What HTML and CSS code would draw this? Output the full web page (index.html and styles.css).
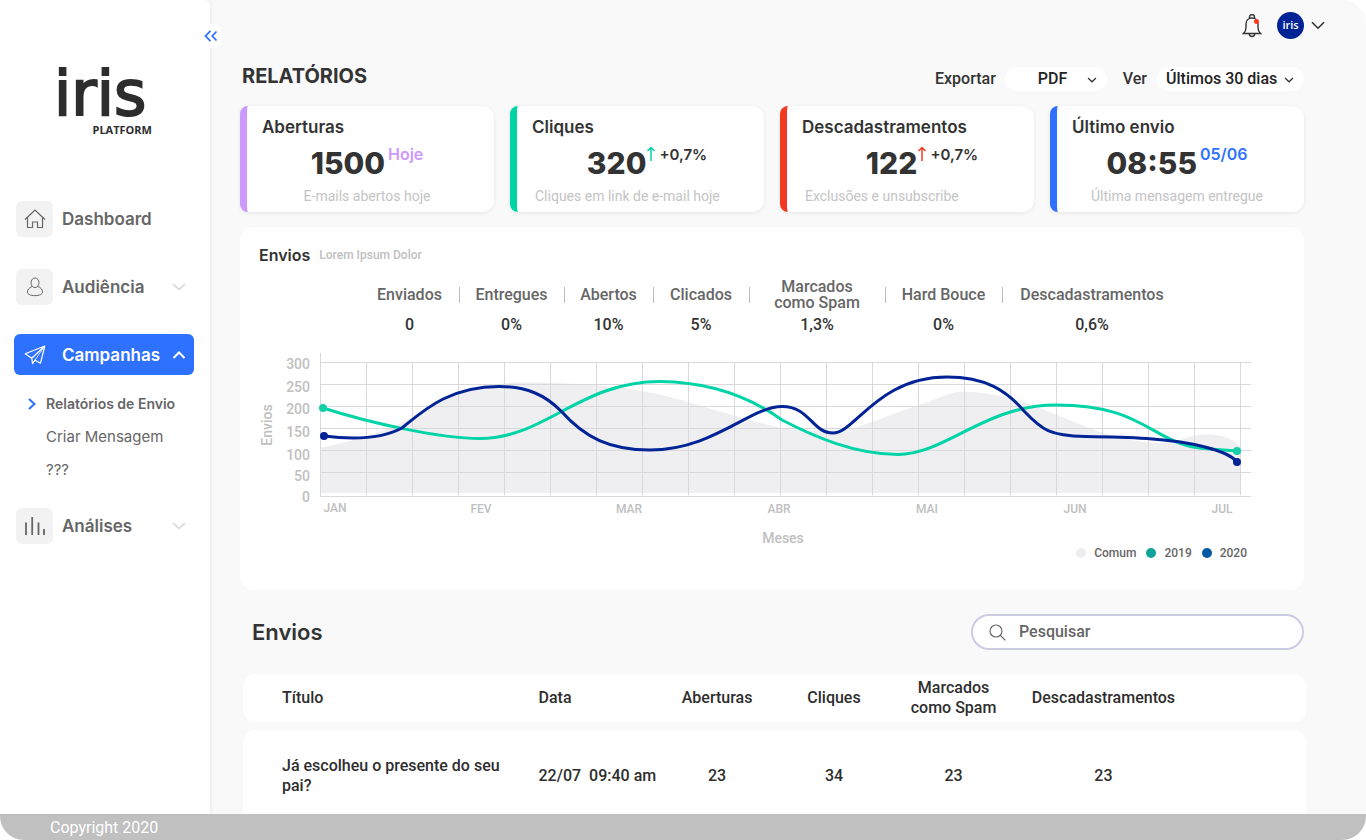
FILE: index.html
```html
<!DOCTYPE html>
<html lang="pt-BR">
<head>
<meta charset="utf-8">
<meta name="viewport" content="width=device-width, initial-scale=1">
<title>iris Platform – Relatórios</title>
<link rel="stylesheet" href="styles.css">
</head>
<body>
<div class="app">
  <div class="shell">
    <aside class="sidebar">
      <button class="collapse" type="button" aria-label="Recolher menu">
        <svg width="14" height="12" viewBox="0 0 14 12"><path d="M6.500 .8 1.500 6l5 5.200M12.500 1.500 8.300 6l4.200 4.500" fill="none" stroke="#2f71ff" stroke-width="1.800"/></svg>
      </button>
      <div class="brand">
        <span class="brand-name">iris</span>
        <span class="brand-sub">PLATFORM</span>
      </div>
      <nav class="nav">
        <a class="nav-item" href="#dashboard">
          <span class="tile"><svg width="22" height="20" viewBox="0 0 22 20"><path d="M1 10.500 11 1l10 9.500M3.500 8.500V18.500h5v-5.500h5v5.500h5V8.500" fill="none" stroke="#666" stroke-width="1.200"/></svg></span>
          <span class="nav-label">Dashboard</span>
        </a>
        <button class="nav-item" type="button">
          <span class="tile"><svg width="18" height="20" viewBox="0 0 18 20"><ellipse cx="9" cy="5.800" rx="4" ry="4.800" fill="none" stroke="#666"/><path d="M6.200 9.500C3.500 10.500 1.500 12.300 1.500 15c0 2.500 3 3.600 7.500 3.600s7.500-1.100 7.500-3.600c0-2.700-2-4.500-4.700-5.500" fill="none" stroke="#666"/></svg></span>
          <span class="nav-label">Audiência</span>
          <svg class="nav-caret" width="14" height="8" viewBox="0 0 14 8"><path d="m1 1 6 5.500L13 1" fill="none" stroke="#ddd" stroke-width="1.800"/></svg>
        </button>
        <div class="nav-group">
          <button class="nav-item nav-item-active" type="button" aria-expanded="true">
            <span class="tile tile-clear"><svg width="22" height="20" viewBox="0 0 22 20"><path d="M1.200 8.800 20.800 1 16.500 18.200 11 15.200l-2.500 3.500-.700-5.500L1.200 8.800ZM7.800 13.200 20.500 1.300" fill="none" stroke="#fff" stroke-width="1.200" stroke-linejoin="round"/><path d="M20.500 1.300 11 15.200" stroke="#fff" stroke-width=".800"/></svg></span>
            <span class="nav-label">Campanhas</span>
            <svg class="nav-caret" width="14" height="8" viewBox="0 0 14 8"><path d="m1.500 7 5.500-5.500L12.500 7" fill="none" stroke="#fff" stroke-width="2"/></svg>
          </button>
          <ul class="subnav">
            <li><a class="current" href="#envio"><svg class="sub-mark" width="8" height="12" viewBox="0 0 8 12"><path d="m1 1 5.500 5L1 11" fill="none" stroke="#2f71ff" stroke-width="2"/></svg>Relatórios de Envio</a></li>
            <li><a href="#criar">Criar Mensagem</a></li>
            <li><a href="#outros">???</a></li>
          </ul>
        </div>
        <button class="nav-item" type="button">
          <span class="tile"><svg width="22" height="20" viewBox="0 0 22 20"><path d="M2 6.500V19M8.200 1v18M14.500 6.500V19M20 13v6" stroke="#666" stroke-width="1.800" fill="none"/></svg></span>
          <span class="nav-label">Análises</span>
          <svg class="nav-caret" width="14" height="8" viewBox="0 0 14 8"><path d="m1 1 6 5.500L13 1" fill="none" stroke="#ddd" stroke-width="1.800"/></svg>
        </button>
      </nav>
    </aside>

    <main class="main">
      <header class="topbar">
        <button class="icon-button" type="button" aria-label="Notificações">
          <svg width="20" height="24" viewBox="0 0 20 24"><path d="M1.500 19.500h17c-1.800-1.700-2.500-3.500-2.500-6V10c0-3.500-2.300-6-6-6s-6 2.500-6 6v3.500c0 2.500-.700 4.300-2.500 6ZM7.500 4.300V3a2.500 2.500 0 0 1 5 0v1.300M7.200 19.800c.300 1.800 1.300 2.700 2.800 2.700s2.500-.900 2.800-2.700" fill="none" stroke="#333" stroke-width="1.400"/><circle cx="14.500" cy="7.500" r="2.500" fill="#ff3a1d"/></svg>
        </button>
        <button class="profile" type="button" aria-label="Conta iris">
          <span class="avatar">iris</span>
          <svg width="14" height="9" viewBox="0 0 14 9"><path d="m1 1.200 6 6 6-6" fill="none" stroke="#333" stroke-width="1.600"/></svg>
        </button>
      </header>

      <div class="toolbar">
        <h1 class="page-title">RELATÓRIOS</h1>
        <label for="exportar">Exportar</label>
        <span class="picker picker-format">
          <select id="exportar"><option>PDF</option></select>
          <svg class="picker-caret" width="10" height="6" viewBox="0 0 10 6"><path d="m1 1 4 3.800L9 1" fill="none" stroke="#333" stroke-width="1.200"/></svg>
        </span>
        <label for="ver">Ver</label>
        <span class="picker picker-period">
          <select id="ver"><option>Últimos 30 dias</option></select>
          <svg class="picker-caret" width="10" height="6" viewBox="0 0 10 6"><path d="m1 1 4 3.800L9 1" fill="none" stroke="#333" stroke-width="1.200"/></svg>
        </span>
      </div>

      <section class="cards">
        <article class="card card-violet">
          <h2>Aberturas</h2>
          <p class="figure"><strong>1500</strong><span class="note">Hoje</span></p>
          <p class="caption">E-mails abertos hoje</p>
        </article>
        <article class="card card-trend card-green">
          <h2>Cliques</h2>
          <p class="figure"><strong>320</strong><svg class="arrow" width="10" height="16" viewBox="0 0 10 16"><path d="M5 15V1.500M1.500 5 5 1.500 8.500 5" fill="none" stroke="#00d4a6" stroke-width="1.500"/></svg><span class="change">+0,7%</span></p>
          <p class="caption">Cliques em link de e-mail hoje</p>
        </article>
        <article class="card card-trend card-red">
          <h2>Descadastramentos</h2>
          <p class="figure"><strong>122</strong><svg class="arrow" width="10" height="16" viewBox="0 0 10 16"><path d="M5 15V1.500M1.500 5 5 1.500 8.500 5" fill="none" stroke="#f23a22" stroke-width="1.500"/></svg><span class="change">+0,7%</span></p>
          <p class="caption">Exclusões e unsubscribe</p>
        </article>
        <article class="card card-blue">
          <h2>Último envio</h2>
          <p class="figure"><strong>08:55</strong><span class="note">05/06</span></p>
          <p class="caption">Última mensagem entregue</p>
        </article>
      </section>

      <section class="report">
        <header class="report-head"><h2>Envios</h2><span>Lorem Ipsum Dolor</span></header>
        <dl class="stats">
          <div><dt>Enviados</dt><dd>0</dd></div>
          <div><dt>Entregues</dt><dd>0%</dd></div>
          <div><dt>Abertos</dt><dd>10%</dd></div>
          <div><dt>Clicados</dt><dd>5%</dd></div>
          <div><dt>Marcados<br>como Spam</dt><dd>1,3%</dd></div>
          <div><dt>Hard Bouce</dt><dd>0%</dd></div>
          <div><dt>Descadastramentos</dt><dd>0,6%</dd></div>
        </dl>
        <svg class="chart" viewBox="240 345 1064 200" role="img" aria-label="Envios por mês">
          <path class="area" d="M320 448C350 442 380 433 405 421C425 410 440 400 458 393C480 385 500 383 520 382.500C560 382 610 385 645 391.500C690 400 730 417 782 428C800 431 825 432 845 430C860 428 885 416 919 405C935 400 945 394 957 392C975 391 995 394 1020 401C1045 409 1080 425 1103 433C1125 440 1160 447 1180 440C1205 430 1232 434 1241 448V493H320Z"/>
          <path class="grid" d="M320.500 353V496M366.500 362V495M412.500 362V495M458.500 362V495M504.500 362V495M550.500 362V495M596.500 362V495M642.500 362V495M688.500 362V495M734.500 362V495M780.500 362V495M826.500 362V495M872.500 362V495M918.500 362V495M964.500 362V495M1010.500 362V495M1056.500 362V495M1102.500 362V495M1148.500 362V495M1194.500 362V495M1240.500 362V495M320 362.500H1251M320 384.500H1251M320 406.500H1251M320 428.500H1251M320 450.500H1251M320 472.500H1251M320 496.500H1251"/>
          <path class="line line-2019" d="M323 408C370 423 440 438.500 480 438.500C545 438.500 580 381.500 660 381.500C710 382 750 397 782 420C815 437 855 454.500 898 454.500C945 454.500 985 405 1056 405C1150 405 1150 446 1210 449L1237 451"/>
          <path class="line line-2020" d="M324 436C355 440 383 438 402 428C422 412 448 386.500 499 386.500C527 386.500 545 395 561 411C585 438 610 450 650 450C713 450 750 406.500 782 406.500C810 406.500 812 433 833 433C855 433 878 377 947 377C985 377 1006 390 1024 411C1042 430 1050 436 1085 436.500C1125 437 1170 438 1205 447C1224 452 1232 456 1237 462"/>
          <g class="dot-2019"><circle cx="323" cy="408" r="4"/><circle cx="1237" cy="451" r="4"/></g>
          <g class="dot-2020"><circle cx="324" cy="436" r="4"/><circle cx="1237" cy="462" r="4"/></g>
          <g class="axis-y"><text x="310" y="369">300</text><text x="310" y="392">250</text><text x="310" y="414">200</text><text x="310" y="437">150</text><text x="310" y="460">100</text><text x="310" y="481">50</text><text x="310" y="502">0</text></g>
          <g class="axis-x"><text x="335" y="512">JAN</text><text x="481" y="513">FEV</text><text x="629" y="513">MAR</text><text x="779" y="513">ABR</text><text x="927" y="513">MAI</text><text x="1075" y="513">JUN</text><text x="1222" y="513">JUL</text></g>
          <text class="axis-title" x="783" y="543">Meses</text>
          <text class="axis-title" transform="translate(272 425) rotate(-90)">Envios</text>
        </svg>
        <ul class="legend">
          <li class="key-common">Comum</li>
          <li class="key-2019">2019</li>
          <li class="key-2020">2020</li>
        </ul>
      </section>

      <section class="list">
        <header class="list-head">
          <h2>Envios</h2>
          <label class="search">
            <svg width="17" height="17" viewBox="0 0 17 17"><circle cx="7" cy="7" r="6" fill="none" stroke="#666" stroke-width="1.200"/><path d="m11.300 11.300 5 5" stroke="#666" stroke-width="1.200"/></svg>
            <input type="search" placeholder="Pesquisar" aria-label="Pesquisar">
          </label>
        </header>
        <table class="table">
          <colgroup><col class="c-title"><col class="c-date"><col class="c-open"><col class="c-click"><col class="c-spam"><col class="c-unsub"><col></colgroup>
          <thead>
            <tr><th>Título</th><th>Data</th><th>Aberturas</th><th>Cliques</th><th>Marcados<br>como Spam</th><th>Descadastramentos</th><td></td></tr>
          </thead>
          <tbody>
            <tr><td>Já escolheu o presente do seu pai?</td><td>22/07&nbsp; 09:40 am</td><td>23</td><td>34</td><td>23</td><td>23</td><td></td></tr>
          </tbody>
        </table>
      </section>
    </main>
  </div>
  <footer class="footer">Copyright 2020</footer>
</div>
</body>
</html>
```

FILE: styles.css
```css
* { box-sizing: border-box; }
body { margin: 0; background: #fff; color: #333; font: 500 16px/20px Roboto, sans-serif; }
h1, h2, p, ul, dl, dd { margin: 0; padding: 0; }
ul { list-style: none; }
a { color: inherit; text-decoration: none; }
button, select, input { font: inherit; color: inherit; border: 0; background: none; padding: 0; margin: 0; }
svg { display: block; flex: none; }

.app { height: 100vh; display: flex; flex-direction: column; background: #f9f9f9; border-radius: 24px; overflow: hidden; }
.shell { flex: 1; min-height: 0; display: flex; }
.footer { height: 26px; padding-left: 50px; background: #c0c0c0; color: #fff; font-weight: 400; line-height: 27px; }

/* Sidebar */
.sidebar { position: relative; flex: none; width: 210px; background: #fff; border-top-right-radius: 6px; box-shadow: 1px 0 4px rgba(0, 0, 0, .06); }
.collapse { position: absolute; top: 24px; right: -12px; width: 24px; height: 24px; padding-left: 6px; border-radius: 8px; background: #fff; }
.brand { display: flex; flex-direction: column; padding: 64px 0 0 54px; color: #2d2d2d; }
.brand-name { font: 400 62px/60px "DejaVu Sans", sans-serif; -webkit-text-stroke: 2px #2d2d2d; }
.brand-sub { width: 98px; text-align: right; font: 700 11px/12px "Open Sans", sans-serif; }
.nav { display: flex; flex-direction: column; gap: 27px; padding: 62px 16px 0 14px; font-family: Inter, sans-serif; color: #666; }
.nav-item { display: flex; align-items: center; width: 100%; height: 41px; padding: 0 8px 0 2px; border-radius: 6px; text-align: left; }
.nav-group + .nav-item { margin-top: -2px; }
.nav-item-active { background: #2f71ff; color: #fff; }
.tile { display: flex; align-items: center; justify-content: center; flex: none; width: 37px; height: 36px; border-radius: 6px; background: #f2f2f2; }
.tile-clear { background: none; }
.nav-label { flex: 1; padding-left: 9px; font-size: 17px; font-weight: 600; }
.subnav { display: flex; flex-direction: column; gap: 13px; padding: 19px 0 0 32px; font-size: 15px; font-weight: 400; }
.subnav a { position: relative; display: block; white-space: nowrap; }
.subnav .current { font-size: 14px; font-weight: 600; }
.sub-mark { position: absolute; left: -18px; top: 4px; }

/* Main column */
.main { flex: 1; min-width: 0; overflow: hidden; padding: 12px 62px 0 30px; }
.topbar { display: flex; justify-content: flex-end; align-items: center; gap: 15px; height: 27px; margin-right: -21px; }
.profile { display: flex; align-items: center; gap: 7px; }
.avatar { width: 27px; height: 27px; border-radius: 50%; background: #002395; color: #fff; font: 600 11px/26px "Open Sans", sans-serif; }
.toolbar { display: flex; align-items: center; height: 24px; margin-top: 28px; }
.page-title { flex: 1; padding: 0 0 6px 2px; font: 700 20px/24px Inter, sans-serif; }
.picker { position: relative; height: 24px; border-radius: 12px; background: #fff; color: #222; }
.picker select { appearance: none; width: 100%; height: 24px; line-height: 24px; }
.picker-format { width: 102px; margin: 0 16px 0 9px; }
.picker-format select { padding-left: 33px; }
.picker-period { width: 147px; margin-left: 10px; }
.picker-period select { padding-left: 9px; }
.picker-caret { position: absolute; right: 10px; top: 10px; pointer-events: none; }

.cards { display: grid; grid-template-columns: repeat(4, 1fr); gap: 16px; margin-top: 15px; }
.card { height: 106px; padding: 10px 7px 0 0; border-left: 7px solid var(--accent); border-radius: 8px 12px 12px 8px; background: #fff; box-shadow: 0 1px 4px rgba(0, 0, 0, .08); }
.card-violet { --accent: #cc99ff; }
.card-green { --accent: #00d4a6; }
.card-red { --accent: #f23a22; }
.card-blue { --accent: #2f71ff; }
.card h2 { padding-left: 15px; font: 600 17px/22px Inter, sans-serif; }
.figure { display: flex; justify-content: center; height: 50px; font-family: Inter, sans-serif; font-weight: 600; }
.figure strong { font-size: 30px; line-height: 50px; font-weight: 800; }
.note { padding-left: 3px; line-height: 32px; color: var(--accent); }
.arrow { margin-top: 8px; }
.change { padding-left: 3px; font-size: 15px; line-height: 34px; }
.caption { text-align: center; font-size: 14px; line-height: 16px; font-weight: 400; color: #c4c4c4; }
.card-trend .figure { padding-left: 20px; }
.card-red .figure { padding-left: 30px; }
.card-trend .caption { padding-left: 18px; text-align: left; }

.report { margin-top: 15px; padding: 18px 0 29px; border-radius: 14px; background: #fff; }
.report-head { display: flex; align-items: center; gap: 9px; height: 20px; padding-left: 19px; }
.report-head h2 { font: 600 16px/20px Inter, sans-serif; }
.report-head span { font-size: 12px; color: #c0c0c0; }
.stats { display: grid; grid-template-columns: 99fr 105fr 89fr 96fr 136fr 117fr 180fr; margin-top: 13px; padding: 0 122px 0 120px; text-align: center; }
.stats div { position: relative; }
.stats div + div::before { content: ""; position: absolute; left: 0; top: 9px; height: 16px; border-left: 1px solid #bbb; }
.stats dt { display: flex; align-items: center; justify-content: center; height: 34px; line-height: 16px; color: #666; }
.stats dd { padding-top: 3px; }
.chart { width: 100%; height: auto; margin-top: 10px; }
.area { fill: #efeff2; }
.grid { fill: none; stroke: #d9d9db; }
.line { fill: none; stroke-width: 3; }
.line-2019 { stroke: #00d4a6; }
.line-2020 { stroke: #002395; }
.dot-2019 { fill: #14cfa8; }
.dot-2020 { fill: #002395; }
.axis-y, .axis-title { font-size: 14px; fill: #c0c0c0; }
.axis-y { text-anchor: end; }
.axis-x, .axis-title { text-anchor: middle; }
.axis-x { font-size: 12px; fill: #c0c0c0; }
.legend { display: flex; justify-content: flex-end; gap: 10px; padding-right: 57px; font-size: 12px; line-height: 16px; color: #666; }
.legend li { display: flex; align-items: center; gap: 8px; }
.legend li::before { content: ""; width: 10px; height: 10px; border-radius: 50%; background: var(--key); }
.key-common { --key: #ededf0; }
.key-2019 { --key: #0fa39a; }
.key-2020 { --key: #005aa3; }

.list-head { display: flex; align-items: center; justify-content: space-between; height: 36px; margin-top: 24px; padding-left: 12px; }
.list-head h2 { font: 600 22px/24px Inter, sans-serif; }
.search { display: flex; align-items: center; gap: 13px; width: 333px; height: 36px; padding: 0 16px; border: 2px solid #cbcce4; border-radius: 18px; background: #fff; }
.search input { flex: 1; min-width: 0; outline: 0; }
.search input::placeholder { color: #666; opacity: 1; }
.table { width: calc(100% - 1px); margin: 16px 0 0 3px; table-layout: fixed; border-spacing: 0 8px; text-align: center; color: #2e2e2e; }
.table th, .table td { height: 92px; padding: 0; background: #fff; font-weight: 500; }
.table thead th, .table thead td { height: 48px; }
.table tr > :first-child { padding: 0 20px 0 39px; border-radius: 12px 0 0 12px; text-align: left; }
.table tr > :nth-child(2) { text-align: left; white-space: nowrap; }
.table tr > :last-child { border-radius: 0 12px 12px 0; }
.c-title { width: 27.8%; }
.c-date { width: 11.2%; }
.c-open { width: 11.2%; }
.c-click { width: 10.8%; }
.c-spam { width: 11.7%; }
.c-unsub { width: 16.5%; }
```
